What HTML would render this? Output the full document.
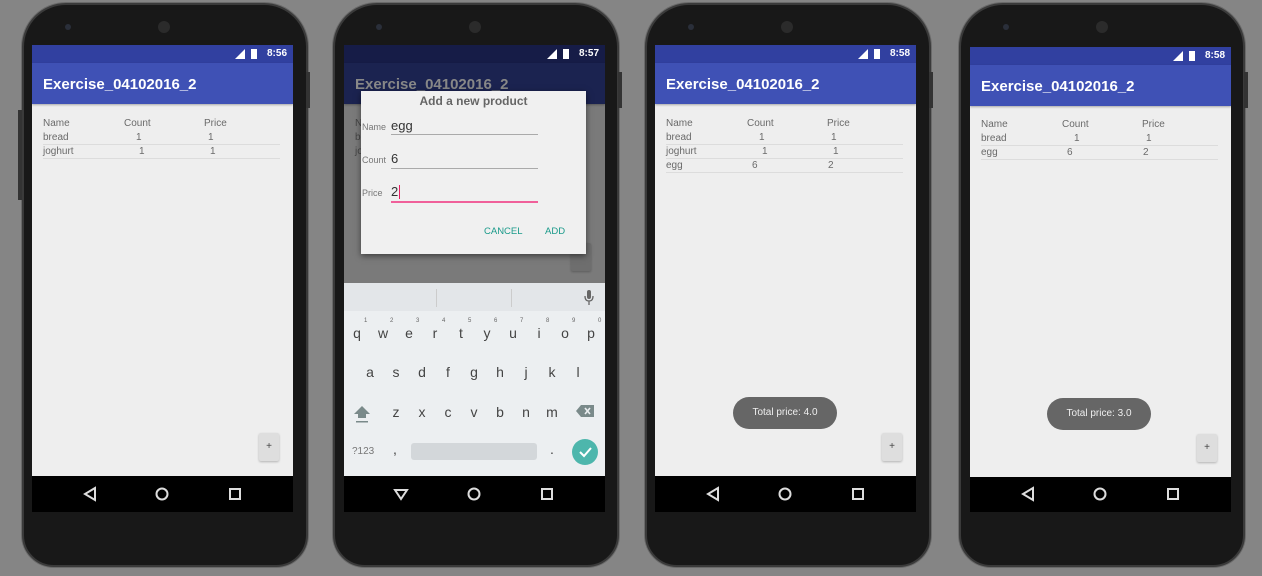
<!DOCTYPE html>
<html><head><meta charset="utf-8"><style>
*{margin:0;padding:0;box-sizing:border-box}
body{width:1262px;height:576px;background:#858585;position:relative;overflow:hidden;font-family:"Liberation Sans",sans-serif}
.ph{position:absolute;top:3px;width:286px;height:564px;background:#181818;border-radius:44px 44px 32px 32px;border:2px solid #3a3a3a;box-shadow:0 0 0 1px #6a6a6a}
.btn{position:absolute;width:4px;background:#333;}
.cam{position:absolute;width:6px;height:6px;border-radius:50%;background:#2a2f3a;top:24px}
.spk{position:absolute;width:12px;height:12px;border-radius:50%;background:#2b2b2b;top:21px}
.sc{position:absolute;width:261px;height:467px;background:#eeeeee;overflow:hidden}
.st{position:absolute;left:0;top:0;width:261px;height:18px;background:#3140a0;color:#fff;font-size:10px;font-weight:bold}
.st span{position:absolute;right:6px;top:3px}
.ico{position:absolute;top:3px;width:10px;height:11px}
.ab{position:absolute;left:0;top:18px;width:261px;height:41px;background:#3f51b5;box-shadow:0 1px 2px rgba(0,0,0,.3)}
.ab b{position:absolute;left:11px;top:13px;color:#fff;font-size:15px}
.t{position:absolute;font-size:10px;color:#6a6a6a;line-height:12px}
.ln{position:absolute;left:11px;width:237px;height:1px;background:#dcdcdc}
.pl{position:absolute;left:227px;top:388px;width:20px;height:28px;background:#dedede;border-radius:2px;box-shadow:0 1px 2px rgba(0,0,0,.25);font-size:10px;color:#444;text-align:center;line-height:28px}
.nav{position:absolute;left:0;top:431px;width:261px;height:36px;background:#000}
.toast{position:absolute;width:104px;height:32px;border-radius:16px;background:#666;color:#eee;font-size:10px;text-align:center;line-height:32px}
.k{position:absolute;font-size:14px;color:#444;width:20px;text-align:center}
.n{position:absolute;font-size:6px;color:#666}
</style></head><body>

<div class="ph" style="left:22px"></div>
<div class="ph" style="left:333px"></div>
<div class="ph" style="left:645px"></div>
<div class="ph" style="left:959px"></div>
<div class="btn" style="left:306px;top:72px;height:36px"></div>
<div class="btn" style="left:618px;top:72px;height:36px"></div>
<div class="btn" style="left:929px;top:72px;height:36px"></div>
<div class="btn" style="left:1244px;top:72px;height:36px"></div>
<div class="btn" style="left:18px;top:110px;height:90px"></div>
<div class="cam" style="left:65px"></div><div class="spk" style="left:158px"></div>
<div class="cam" style="left:376px"></div><div class="spk" style="left:469px"></div>
<div class="cam" style="left:688px"></div><div class="spk" style="left:781px"></div>
<div class="cam" style="left:1003px"></div><div class="spk" style="left:1096px"></div>

<!-- PHONE 1 -->
<div class="sc" style="left:32px;top:45px">
<div class="st"><svg class="ico" style="right:48px" viewBox="0 0 10 11"><path d="M0 11L10 1V11Z" fill="#fff"/></svg><svg class="ico" style="right:34px" viewBox="0 0 10 11"><rect x="2" y="1" width="6" height="10" fill="#fff"/></svg><span>8:56</span></div>
<div class="ab"><b>Exercise_04102016_2</b></div>
<div class="t" style="left:11px;top:73px">Name</div><div class="t" style="left:92px;top:73px">Count</div><div class="t" style="left:172px;top:73px">Price</div>
<div class="t" style="left:11px;top:87px">bread</div><div class="t" style="left:104px;top:87px">1</div><div class="t" style="left:176px;top:87px">1</div>
<div class="ln" style="top:99px"></div>
<div class="t" style="left:11px;top:101px">joghurt</div><div class="t" style="left:107px;top:101px">1</div><div class="t" style="left:178px;top:101px">1</div>
<div class="ln" style="top:113px"></div>
<div class="pl">+</div>
<div class="nav"><svg width="261" height="36"><path d="M63 12L53 18L63 24Z" fill="none" stroke="#ddd" stroke-width="2"/><circle cx="130" cy="18" r="5.5" fill="none" stroke="#ddd" stroke-width="2"/><rect x="198" y="13" width="10" height="10" fill="none" stroke="#ddd" stroke-width="2"/></svg></div>
</div>

<!-- PHONE 2 -->
<div class="sc" style="left:344px;top:45px;background:#7a7a7a">
<div class="st" style="background:#161c47"><svg class="ico" style="right:48px" viewBox="0 0 10 11"><path d="M0 11L10 1V11Z" fill="#fff"/></svg><svg class="ico" style="right:34px" viewBox="0 0 10 11"><rect x="2" y="1" width="6" height="10" fill="#fff"/></svg><span>8:57</span></div>
<div class="ab" style="background:#1b2350"><b style="color:#888">Exercise_04102016_2</b></div>
<div class="t" style="left:11px;top:73px;color:#444">N</div><div class="t" style="left:11px;top:87px;color:#444">b</div><div class="t" style="left:11px;top:101px;color:#444">jo</div>
<div class="pl" style="top:198px;background:#6e6e6e"></div>
<div style="position:absolute;left:17px;top:46px;width:225px;height:163px;background:#f0f0f0;box-shadow:0 2px 6px rgba(0,0,0,.5)">
<div style="position:absolute;left:0;width:225px;top:3px;text-align:center;font-size:12px;font-weight:bold;color:#666">Add a new product</div>
<div class="t" style="left:1px;top:30px;font-size:9px;color:#777">Name</div><div style="position:absolute;left:30px;top:27px;font-size:13px;color:#333">egg</div><div style="position:absolute;left:30px;top:43px;width:147px;height:1px;background:#aaa"></div>
<div class="t" style="left:1px;top:63px;font-size:9px;color:#777">Count</div><div style="position:absolute;left:30px;top:60px;font-size:13px;color:#333">6</div><div style="position:absolute;left:30px;top:77px;width:147px;height:1px;background:#aaa"></div>
<div class="t" style="left:1px;top:96px;font-size:9px;color:#777">Price</div><div style="position:absolute;left:30px;top:93px;font-size:13px;color:#333">2</div><div style="position:absolute;left:38px;top:94px;width:1px;height:14px;background:#e91e63"></div><div style="position:absolute;left:30px;top:110px;width:147px;height:2px;background:#f0609a"></div>
<div style="position:absolute;left:123px;top:135px;font-size:9.5px;color:#1a9a8a">CANCEL</div>
<div style="position:absolute;left:184px;top:135px;font-size:9.5px;color:#1a9a8a">ADD</div>
</div>
<div style="position:absolute;left:0;top:238px;width:261px;height:193px;background:#eceff1">
<div style="position:absolute;left:0;top:0;width:261px;height:28px;background:#e3e6e9"></div>
<div style="position:absolute;left:92px;top:6px;width:1px;height:18px;background:#ccc"></div>
<div style="position:absolute;left:167px;top:6px;width:1px;height:18px;background:#ccc"></div>
<svg style="position:absolute;left:240px;top:7px" width="10" height="16" viewBox="0 0 10 16"><rect x="3" y="0" width="4" height="9" rx="2" fill="#666"/><path d="M1 6Q1 11 5 11Q9 11 9 6M5 11V15" fill="none" stroke="#666" stroke-width="1.3"/></svg>
</div>
<div class="k" style="left:3px;top:280px">q</div><div class="k" style="left:29px;top:280px">w</div><div class="k" style="left:55px;top:280px">e</div><div class="k" style="left:81px;top:280px">r</div><div class="k" style="left:107px;top:280px">t</div><div class="k" style="left:133px;top:280px">y</div><div class="k" style="left:159px;top:280px">u</div><div class="k" style="left:185px;top:280px">i</div><div class="k" style="left:211px;top:280px">o</div><div class="k" style="left:237px;top:280px">p</div>
<div class="n" style="left:20px;top:273px">1</div><div class="n" style="left:46px;top:273px">2</div><div class="n" style="left:72px;top:273px">3</div><div class="n" style="left:98px;top:273px">4</div><div class="n" style="left:124px;top:273px">5</div><div class="n" style="left:150px;top:273px">6</div><div class="n" style="left:176px;top:273px">7</div><div class="n" style="left:202px;top:273px">8</div><div class="n" style="left:228px;top:273px">9</div><div class="n" style="left:254px;top:273px">0</div>
<div class="k" style="left:16px;top:319px">a</div><div class="k" style="left:42px;top:319px">s</div><div class="k" style="left:68px;top:319px">d</div><div class="k" style="left:94px;top:319px">f</div><div class="k" style="left:120px;top:319px">g</div><div class="k" style="left:146px;top:319px">h</div><div class="k" style="left:172px;top:319px">j</div><div class="k" style="left:198px;top:319px">k</div><div class="k" style="left:224px;top:319px">l</div>
<div class="k" style="left:42px;top:359px">z</div><div class="k" style="left:68px;top:359px">x</div><div class="k" style="left:94px;top:359px">c</div><div class="k" style="left:120px;top:359px">v</div><div class="k" style="left:146px;top:359px">b</div><div class="k" style="left:172px;top:359px">n</div><div class="k" style="left:198px;top:359px">m</div>
<svg style="position:absolute;left:9px;top:360px" width="18" height="18"><path d="M9 1L1 9H5V13H13V9H17Z" fill="#7a8a8a"/><rect x="3" y="16" width="12" height="1.5" fill="#7a8a8a"/></svg>
<svg style="position:absolute;left:232px;top:360px" width="18" height="12"><path d="M5 0H18V12H5L0 6Z" fill="#7a8a8a"/><path d="M9 3L14 9M14 3L9 9" stroke="#eceff1" stroke-width="1.6"/></svg>
<div style="position:absolute;left:8px;top:401px;font-size:10px;color:#777">?123</div>
<div class="k" style="left:41px;top:396px">,</div>
<div style="position:absolute;left:67px;top:398px;width:126px;height:17px;background:#d3d7da;border-radius:3px"></div>
<div class="k" style="left:198px;top:396px">.</div>
<div style="position:absolute;left:228px;top:394px;width:26px;height:26px;border-radius:50%;background:#4db6ac"></div>
<svg style="position:absolute;left:228px;top:394px" width="26" height="26"><path d="M8 13L12 17L19 9" fill="none" stroke="#fff" stroke-width="2"/></svg>
<div class="nav"><svg width="261" height="36"><path d="M51 14L57 23L63 14Z" fill="none" stroke="#ddd" stroke-width="2"/><circle cx="130" cy="18" r="5.5" fill="none" stroke="#ddd" stroke-width="2"/><rect x="198" y="13" width="10" height="10" fill="none" stroke="#ddd" stroke-width="2"/></svg></div>
</div>

<!-- PHONE 3 -->
<div class="sc" style="left:655px;top:45px">
<div class="st"><svg class="ico" style="right:48px" viewBox="0 0 10 11"><path d="M0 11L10 1V11Z" fill="#fff"/></svg><svg class="ico" style="right:34px" viewBox="0 0 10 11"><rect x="2" y="1" width="6" height="10" fill="#fff"/></svg><span>8:58</span></div>
<div class="ab"><b>Exercise_04102016_2</b></div>
<div class="t" style="left:11px;top:73px">Name</div><div class="t" style="left:92px;top:73px">Count</div><div class="t" style="left:172px;top:73px">Price</div>
<div class="t" style="left:11px;top:87px">bread</div><div class="t" style="left:104px;top:87px">1</div><div class="t" style="left:176px;top:87px">1</div>
<div class="ln" style="top:99px"></div>
<div class="t" style="left:11px;top:101px">joghurt</div><div class="t" style="left:107px;top:101px">1</div><div class="t" style="left:178px;top:101px">1</div>
<div class="ln" style="top:113px"></div>
<div class="t" style="left:11px;top:115px">egg</div><div class="t" style="left:97px;top:115px">6</div><div class="t" style="left:173px;top:115px">2</div>
<div class="ln" style="top:127px"></div>
<div class="toast" style="left:78px;top:352px">Total price: 4.0</div>
<div class="pl">+</div>
<div class="nav"><svg width="261" height="36"><path d="M63 12L53 18L63 24Z" fill="none" stroke="#ddd" stroke-width="2"/><circle cx="130" cy="18" r="5.5" fill="none" stroke="#ddd" stroke-width="2"/><rect x="198" y="13" width="10" height="10" fill="none" stroke="#ddd" stroke-width="2"/></svg></div>
</div>

<!-- PHONE 4 -->
<div class="sc" style="left:970px;top:47px;height:465px">
<div class="st"><svg class="ico" style="right:48px" viewBox="0 0 10 11"><path d="M0 11L10 1V11Z" fill="#fff"/></svg><svg class="ico" style="right:34px" viewBox="0 0 10 11"><rect x="2" y="1" width="6" height="10" fill="#fff"/></svg><span>8:58</span></div>
<div class="ab"><b>Exercise_04102016_2</b></div>
<div class="t" style="left:11px;top:72px">Name</div><div class="t" style="left:92px;top:72px">Count</div><div class="t" style="left:172px;top:72px">Price</div>
<div class="t" style="left:11px;top:86px">bread</div><div class="t" style="left:104px;top:86px">1</div><div class="t" style="left:176px;top:86px">1</div>
<div class="ln" style="top:98px"></div>
<div class="t" style="left:11px;top:100px">egg</div><div class="t" style="left:97px;top:100px">6</div><div class="t" style="left:173px;top:100px">2</div>
<div class="ln" style="top:112px"></div>
<div class="toast" style="left:77px;top:351px">Total price: 3.0</div>
<div class="pl" style="top:387px">+</div>
<div class="nav" style="top:430px;height:35px"><svg width="261" height="36"><path d="M63 11L53 17L63 23Z" fill="none" stroke="#ddd" stroke-width="2"/><circle cx="130" cy="17" r="5.5" fill="none" stroke="#ddd" stroke-width="2"/><rect x="198" y="12" width="10" height="10" fill="none" stroke="#ddd" stroke-width="2"/></svg></div>
</div>

</body></html>
